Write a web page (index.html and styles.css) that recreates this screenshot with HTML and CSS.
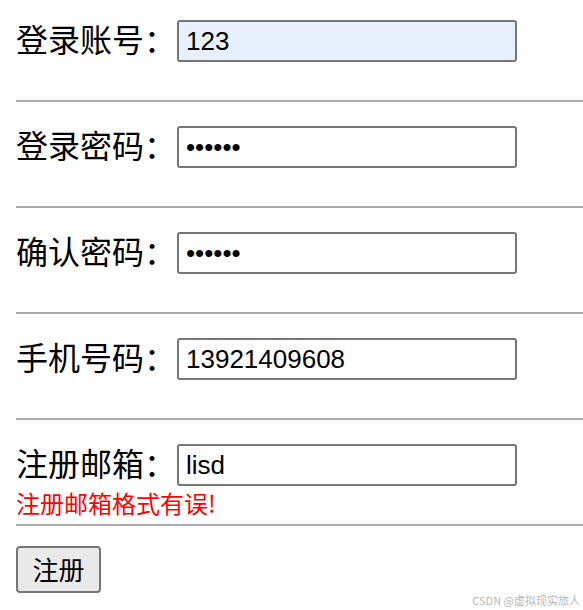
FILE: index.html
```html
<!DOCTYPE html>
<html lang="zh">
<head>
<meta charset="utf-8">
<title>注册</title>
<link rel="stylesheet" href="styles.css">
</head>
<body>
<form class="form">
  <div class="field">
    <div class="row">
      <label class="label">登录账号：</label>
      <input class="input autofill" type="text" value="123">
    </div>
    <div class="msg"></div>
  </div>
  <hr class="rule">
  <div class="field">
    <div class="row">
      <label class="label">登录密码：</label>
      <input class="input" type="password" value="123456">
    </div>
    <div class="msg"></div>
  </div>
  <hr class="rule">
  <div class="field">
    <div class="row">
      <label class="label">确认密码：</label>
      <input class="input" type="password" value="123456">
    </div>
    <div class="msg"></div>
  </div>
  <hr class="rule">
  <div class="field">
    <div class="row">
      <label class="label">手机号码：</label>
      <input class="input" type="text" value="13921409608">
    </div>
    <div class="msg"></div>
  </div>
  <hr class="rule">
  <div class="field">
    <div class="row">
      <label class="label">注册邮箱：</label>
      <input class="input" type="text" value="lisd">
    </div>
    <div class="msg error">注册邮箱格式有误!</div>
  </div>
  <hr class="rule">
  <div class="actions">
    <button class="btn" type="button">注册</button>
  </div>
</form>
<div class="watermark">CSDN @虚拟现实旅人</div>
</body>
</html>
```
FILE: styles.css
```css
html, body {
  margin: 0;
  padding: 0;
  background: #fff;
}
body {
  padding: 20px 0 0 16px;
  font-family: "Noto Sans CJK SC", "Noto Sans", sans-serif;
  color: #000;
  overflow: hidden;
}
.form {
  display: flex;
  flex-direction: column;
}
.field {
  padding-top: 24px;
}
.field:first-child {
  padding-top: 0;
}
.row {
  display: flex;
  align-items: center;
  height: 42px;
}
.label {
  font-size: 32px;
  line-height: 42px;
  width: 161px;
  padding-bottom: 7px;
  white-space: nowrap;
}
.input {
  box-sizing: border-box;
  width: 340px;
  height: 42px;
  margin: 0;
  padding: 0 7px;
  border: 2px solid #767676;
  border-radius: 3px;
  background: #fff;
  font-family: "Liberation Sans", Arial, sans-serif;
  font-size: 26px;
  color: #000;
  outline: none;
}
.input.autofill {
  background: #e8f0fe;
}
.msg {
  height: 38px;
  box-sizing: border-box;
  padding-top: 1px;
  font-size: 24px;
  line-height: 32px;
}
.error {
  color: #ff0000;
}
.rule {
  margin: 0;
  height: 0;
  border: 0;
  border-top: 2px solid #aaaaaa;
}
.actions {
  padding-top: 20px;
}
.btn {
  box-sizing: border-box;
  width: 85px;
  height: 47px;
  margin: 0;
  padding: 0 0 3px;
  border: 2px solid #767676;
  border-radius: 4px;
  background: #e9e9e9;
  font-family: "Noto Sans CJK SC", sans-serif;
  font-size: 26px;
  color: #000;
}
.watermark {
  position: absolute;
  right: 3px;
  bottom: 3px;
  font-family: "Noto Sans CJK SC", sans-serif;
  font-size: 11px;
  color: #b8b8b8;
  line-height: 14px;
}
```
